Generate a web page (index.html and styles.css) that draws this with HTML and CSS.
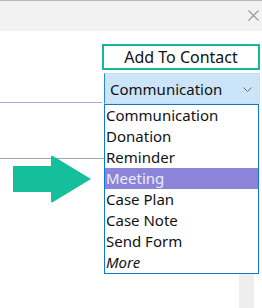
FILE: index.html
```html
<!DOCTYPE html>
<html>
<head>
<meta charset="utf-8">
<link rel="stylesheet" href="styles.css">
</head>
<body>
<div class="titlebar">
  <svg class="close" width="11" height="11" viewBox="0 0 11 11"><path d="M0.5 0.5 L10.5 10.5 M10.5 0.5 L0.5 10.5" stroke="#9a9a9a" stroke-width="1.2" fill="none"/></svg>
</div>
<div class="content">
  <div class="left">
    <div class="rule rule-purple"></div>
    <div class="rule rule-grey"></div>
  </div>
  <div class="right">
    <button class="add-btn">Add To Contact</button>
    <div class="select">
      <span>Communication</span>
      <svg class="chev" width="9" height="5" viewBox="0 0 9 5"><path d="M0.5 0.5 L4.5 4.5 L8.5 0.5" stroke="#666" stroke-width="1" fill="none"/></svg>
    </div>
    <ul class="list">
      <li>Communication</li>
      <li>Donation</li>
      <li>Reminder</li>
      <li class="active">Meeting</li>
      <li>Case Plan</li>
      <li>Case Note</li>
      <li>Send Form</li>
      <li class="more">More</li>
    </ul>
    <div class="track"></div>
  </div>
  <svg class="arrow" width="80" height="50" viewBox="0 0 80 50"><path d="M0 11 H38 V2 Q38 0 40 1 L78 24 L40 47 Q38 48 38 46 V37 H0 Z" fill="#15bf9b"/></svg>
</div>
</body>
</html>
```
FILE: styles.css
```css
html, body {
  margin: 0;
  padding: 0;
  background: #fff;
  font-family: "Noto Sans", "Liberation Sans", sans-serif;
}
.titlebar {
  height: 30px;
  border-top: 1px solid #b9b9b9;
  background: #f2f2f2;
  display: flex;
  justify-content: flex-end;
  align-items: flex-start;
}
.close {
  margin-top: 9px;
  margin-right: 3px;
}
.content {
  position: relative;
  display: grid;
  grid-template-columns: 102px 158px;
}
.left {
  display: flex;
  flex-direction: column;
}
.rule-purple {
  height: 71px;
  border-bottom: 1px solid #aaa5e8;
}
.rule-grey {
  height: 55px;
  border-bottom: 1px solid #a3a3a3;
  margin-right: -2px;
}
.right {
  padding-top: 13px;
  display: flex;
  flex-direction: column;
}
.add-btn {
  box-sizing: border-box;
  height: 26px;
  width: 158px;
  border: 2px solid #17b994;
  background: #fff;
  font-family: inherit;
  font-size: 16px;
  color: #111;
  padding: 0;
  margin: 0;
}
.select {
  box-sizing: border-box;
  margin: 3px 0 0 2px;
  height: 31px;
  width: 156px;
  background: #cce4f7;
  border: 1px solid #c2e0f2;
  border-left-color: #2a86d6;
  display: flex;
  align-items: center;
  justify-content: space-between;
  padding: 0 7px 0 5px;
  font-size: 15px;
  color: #111;
}
.chev {
  margin-top: 1px;
}
.list {
  list-style: none;
  margin: 0 0 0 2px;
  padding: 0;
  width: 155px;
  box-sizing: border-box;
  border: 1px solid #0a78d4;
  font-size: 15px;
  color: #111;
}
.list li {
  height: 21px;
  line-height: 21px;
  padding-left: 1px;
}
.list li.active {
  background: #8c84d8;
  color: #eeeefa;
}
.list li.more {
  font-style: italic;
}
.track {
  margin-left: 137px;
  width: 15px;
  height: 36px;
  background: #eeeeee;
}
.arrow {
  position: absolute;
  left: 13px;
  top: 124px;
}
```
